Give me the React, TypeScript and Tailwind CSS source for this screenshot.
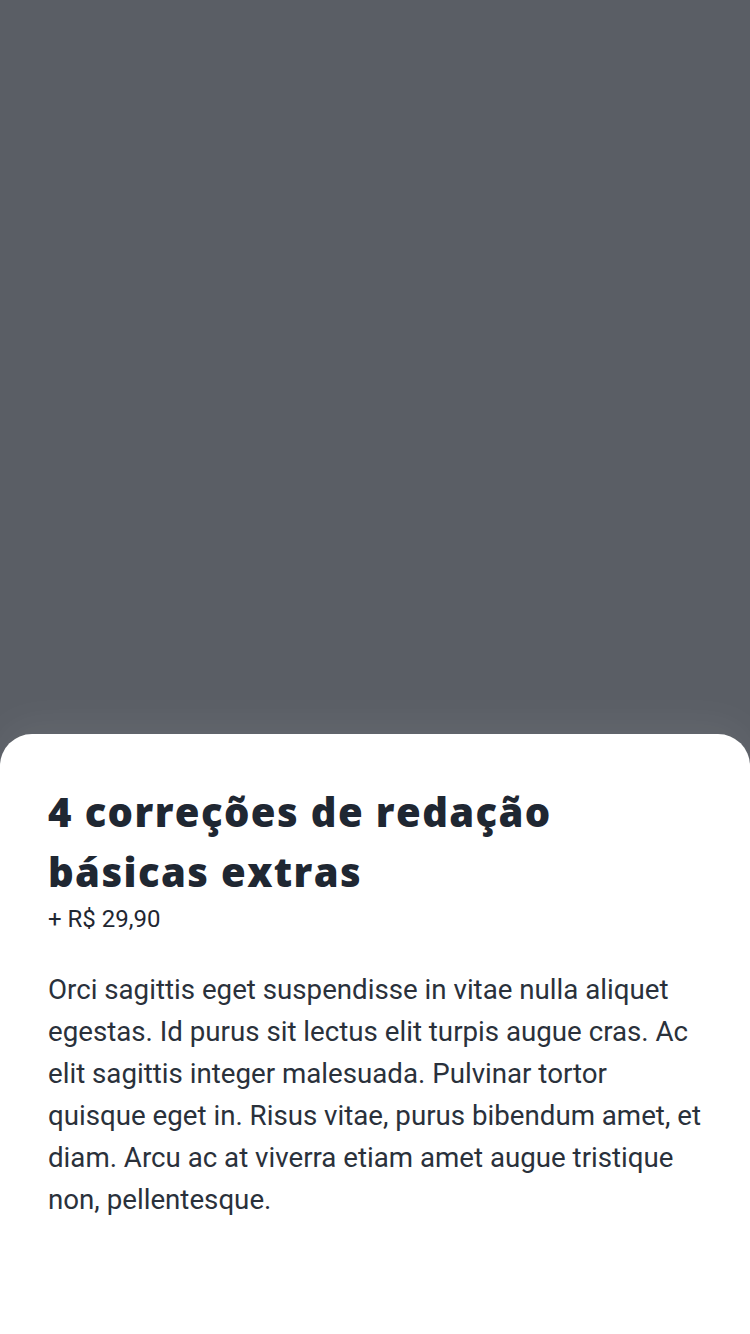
export default function App() {
  return (
    <div className="flex h-[1334px] w-[750px] flex-col bg-[#5a5e65]">
      <div className="h-[734px] shrink-0" />
      <div className="flex flex-1 flex-col rounded-t-[32px] bg-white px-12 pt-12 shadow-[0_-12px_40px_rgba(255,255,255,0.06)]">
        <h1 className="text-[40px] font-extrabold leading-[60px] tracking-[1.4px] text-[#1f2732] [font-family:'Open_Sans',sans-serif]">
          4 correções de redação
          <br />
          básicas extras
        </h1>
        <p className="mt-[1px] text-[24px] leading-[32px] text-[#1f2732] [font-family:Roboto,sans-serif]">
          + R$ 29,90
        </p>
        <p className="mt-[34px] text-[27.7px] leading-[42px] text-[#2a313b] [font-family:Roboto,sans-serif]">
          Orci sagittis eget suspendisse in vitae nulla aliquet egestas. Id purus sit lectus elit turpis augue cras. Ac
          elit sagittis integer malesuada. Pulvinar tortor quisque eget in. Risus vitae, purus bibendum amet, et diam.
          Arcu ac at viverra etiam amet augue tristique non, pellentesque.
        </p>
      </div>
    </div>
  );
}
